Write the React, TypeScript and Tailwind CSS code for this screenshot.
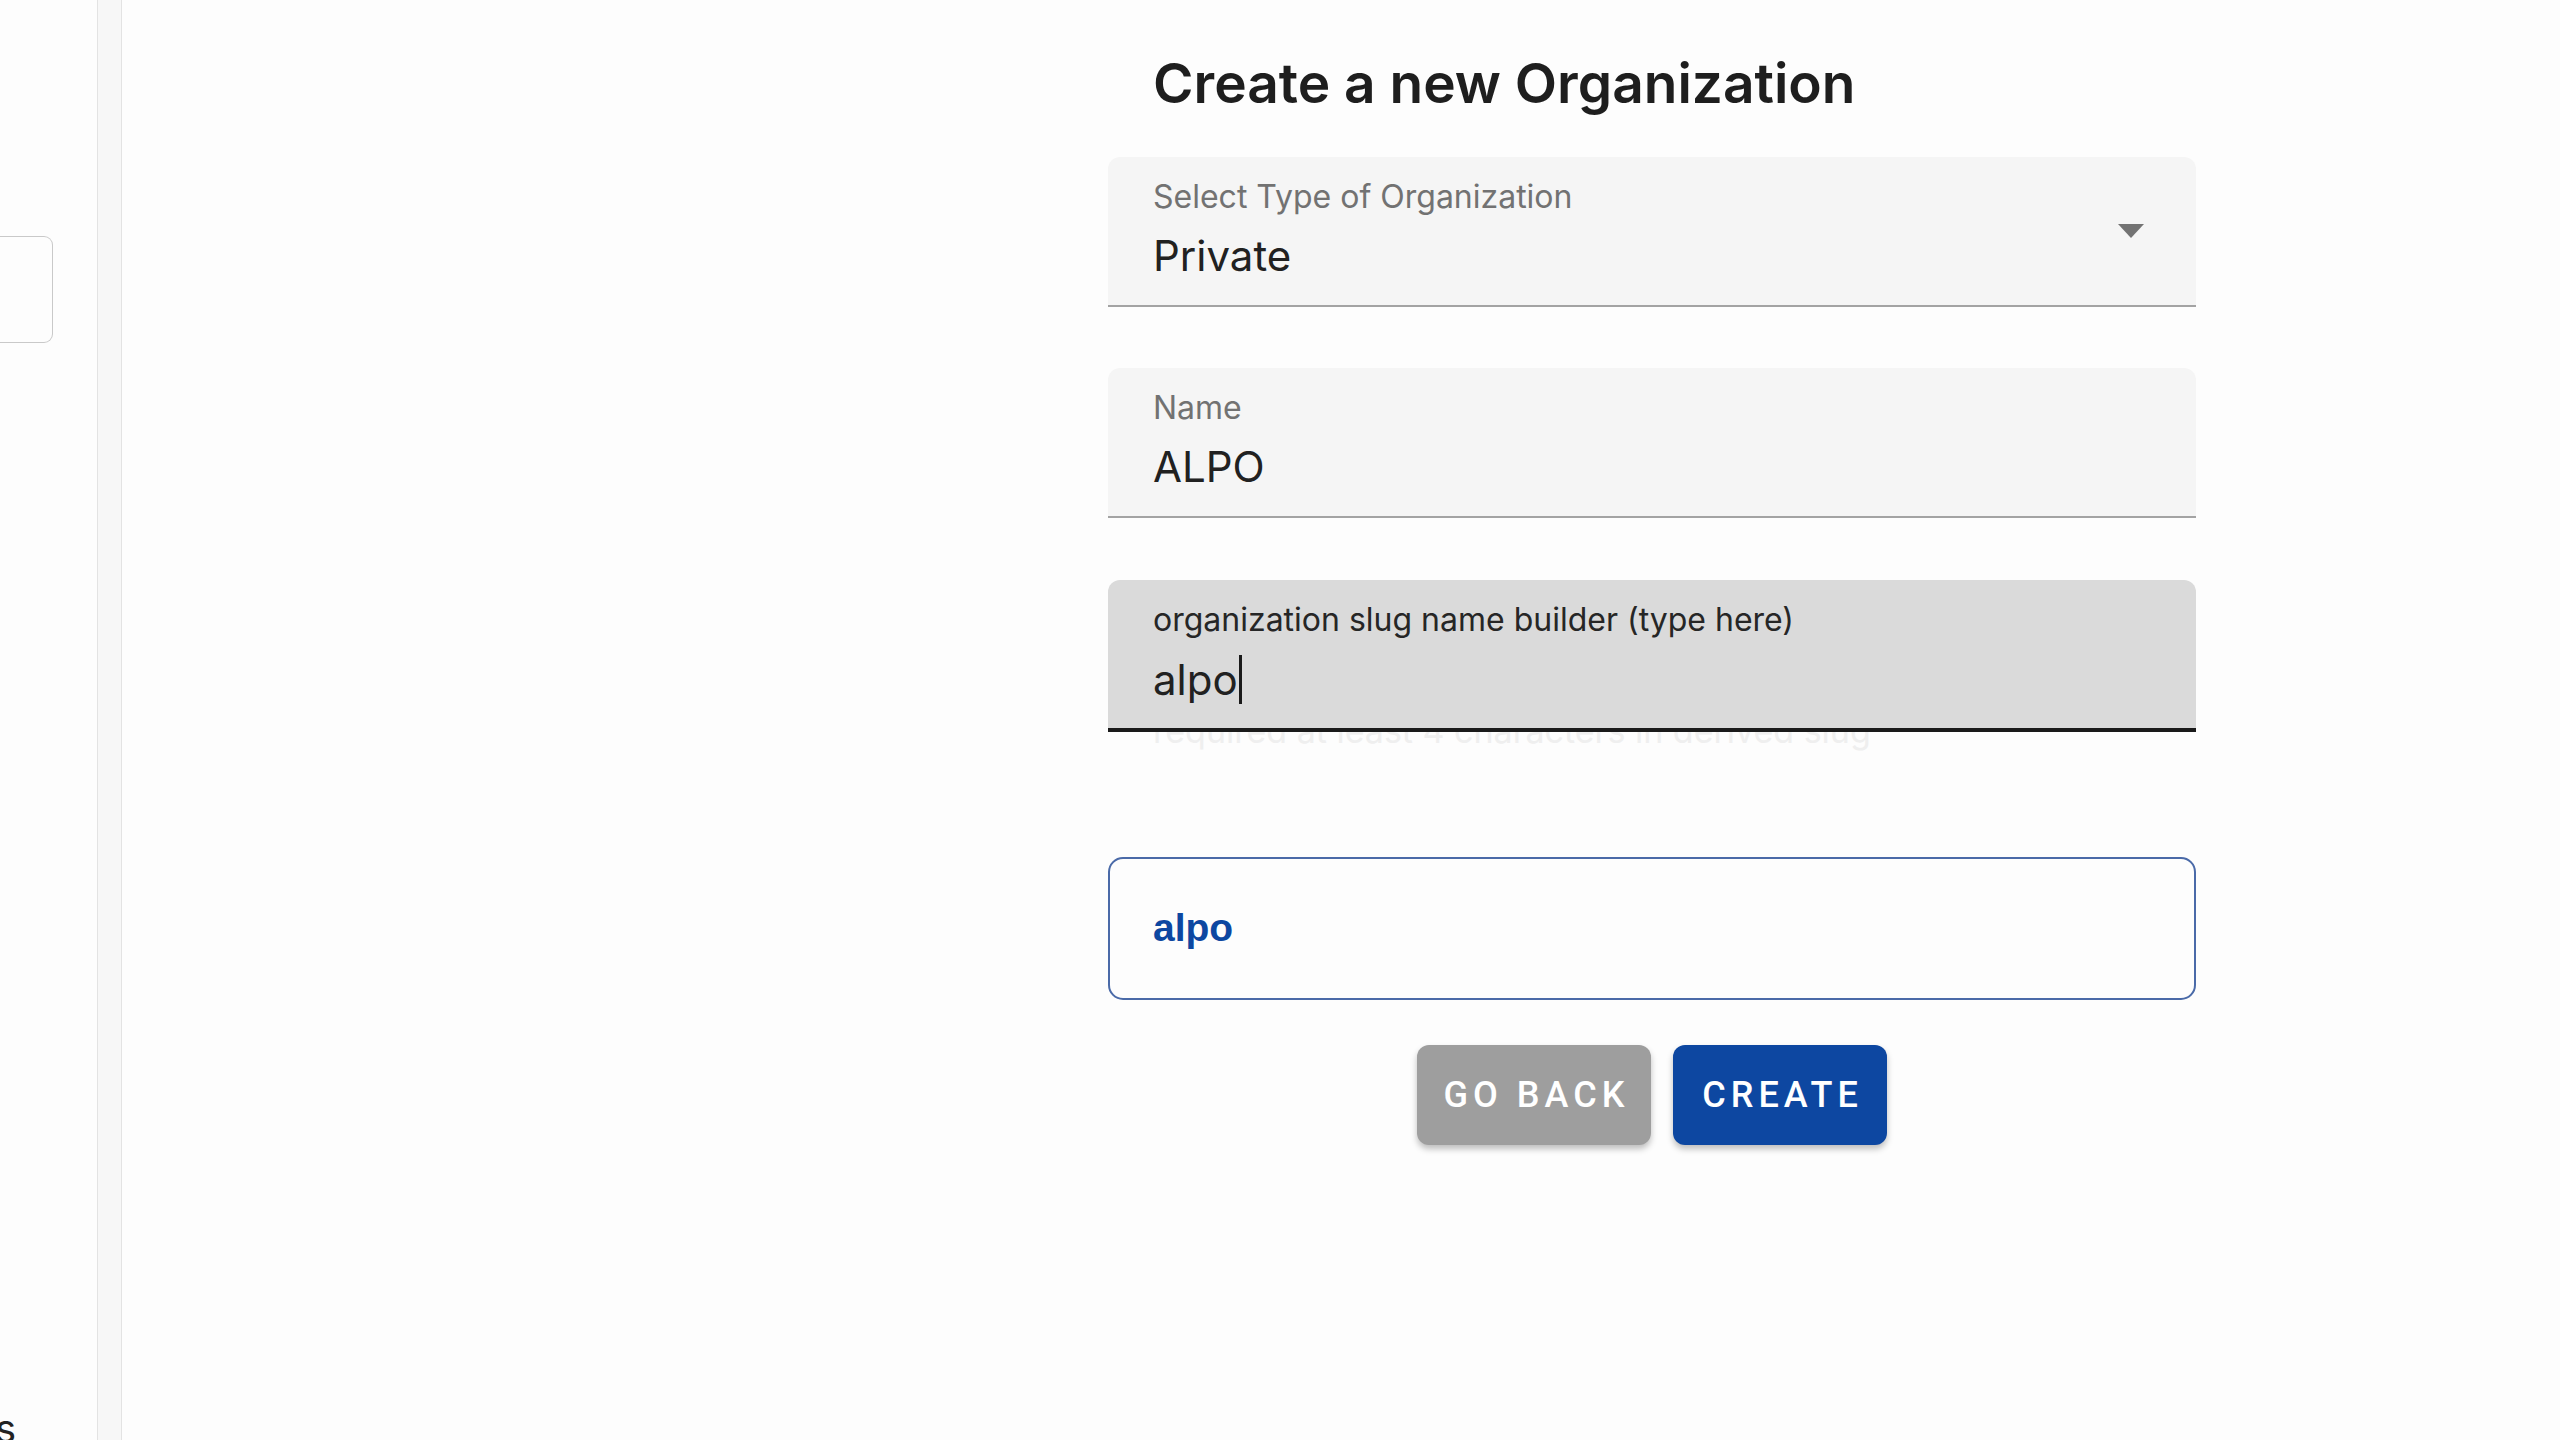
const inter = { fontFamily: "Inter, Roboto, 'Noto Sans', sans-serif" };

interface FilledFieldProps {
  label: string;
  value: string;
  focused?: boolean;
  select?: boolean;
  caret?: boolean;
}

const FilledField = (props: FilledFieldProps) => {
  return (
    <div
      className={
        props.focused
          ? "relative z-10 flex h-[152px] rounded-t-[12px] border-b-4 border-[#1a1a1a] bg-[#dadada]"
          : "relative z-10 flex h-[150px] rounded-t-[12px] border-b-2 border-[#a3a3a3] bg-[#f5f5f5]"
      }
    >
      <div className="flex flex-1 flex-col pl-[45px] pt-[22px]">
        <p
          className={
            props.focused
              ? "text-[32px] leading-[36px] text-[#262626]"
              : "text-[32px] leading-[36px] text-[#727272]"
          }
        >
          {props.label}
        </p>
        <p className="mt-[17px] flex items-center text-[42px] leading-[48px] text-[#212121]">
          {props.value}
          {props.caret && <span className="ml-[1px] inline-block h-[49px] w-[3px] bg-[#1a1a1a]" />}
        </p>
      </div>
      {props.select && (
        <div className="mr-[52px] flex items-center">
          <svg width="26" height="14" viewBox="0 0 26 14">
            <path d="M0 0 L26 0 L13 14 Z" fill="#737373" />
          </svg>
        </div>
      )}
    </div>
  );
};

const App = () => {
  return (
    <div className="flex h-[1440px] w-full overflow-hidden bg-[#fdfdfd]" style={inter}>
      {/* left edge of the previous panel */}
      <div className="flex w-[97px] flex-col">
        <div className="mt-[236px] h-[107px] w-[53px] rounded-r-[9px] border border-l-0 border-[#c9c9c9]" />
        <div className="flex-1" />
        <div className="mb-[-13px] flex w-[16px] justify-end overflow-hidden">
          <span className="text-[40px] leading-[48px] text-[#222]">Settings</span>
        </div>
      </div>

      {/* divider strip */}
      <div className="w-[25px] border-x border-[#e3e3e3] bg-[#f7f7f7]" />

      {/* main */}
      <div className="flex-1">
        <div className="ml-[986px] flex w-[1088px] flex-col">
          <h1 className="mt-[55px] pl-[45px] text-[55px] font-semibold leading-[56px] text-[#1e1e1e]">
            Create a new Organization
          </h1>

          <div className="mt-[46px]">
            <FilledField label="Select Type of Organization" value="Private" select />
          </div>

          <div className="mt-[61px]">
            <FilledField label="Name" value="ALPO" />
          </div>

          <div className="mt-[62px]">
            <FilledField
              label="organization slug name builder (type here)"
              value="alpo"
              focused
              caret
            />
          </div>
          <p className="relative z-0 -mt-[20px] pl-[45px] text-[34px] leading-[38px] text-[#efefef]">
            required at least 4 characters in derived slug
          </p>

          <div className="mt-[107px] flex h-[143px] items-center rounded-[15px] border-2 border-[#4a6aa8] pl-[43px]">
            <span
              className="text-[39px] font-bold text-[#0d47a1]"
              style={{ fontFamily: "'Liberation Sans', Arial, sans-serif" }}
            >
              alpo
            </span>
          </div>

          <div className="mt-[45px] flex justify-center gap-[22px]" style={{ fontFamily: "Roboto, sans-serif" }}>
            <button className="flex h-[100px] w-[234px] items-center justify-center rounded-[12px] bg-[#9e9e9e] pl-[5px] text-[36px] font-medium uppercase tracking-[5px] text-white shadow-[0_4px_6px_rgba(0,0,0,0.25)]">
              Go Back
            </button>
            <button className="flex h-[100px] w-[214px] items-center justify-center rounded-[12px] bg-[#0d47a1] pl-[5px] text-[36px] font-medium uppercase tracking-[5px] text-white shadow-[0_4px_6px_rgba(0,0,0,0.25)]">
              Create
            </button>
          </div>
        </div>
      </div>
    </div>
  );
};

export default App;
